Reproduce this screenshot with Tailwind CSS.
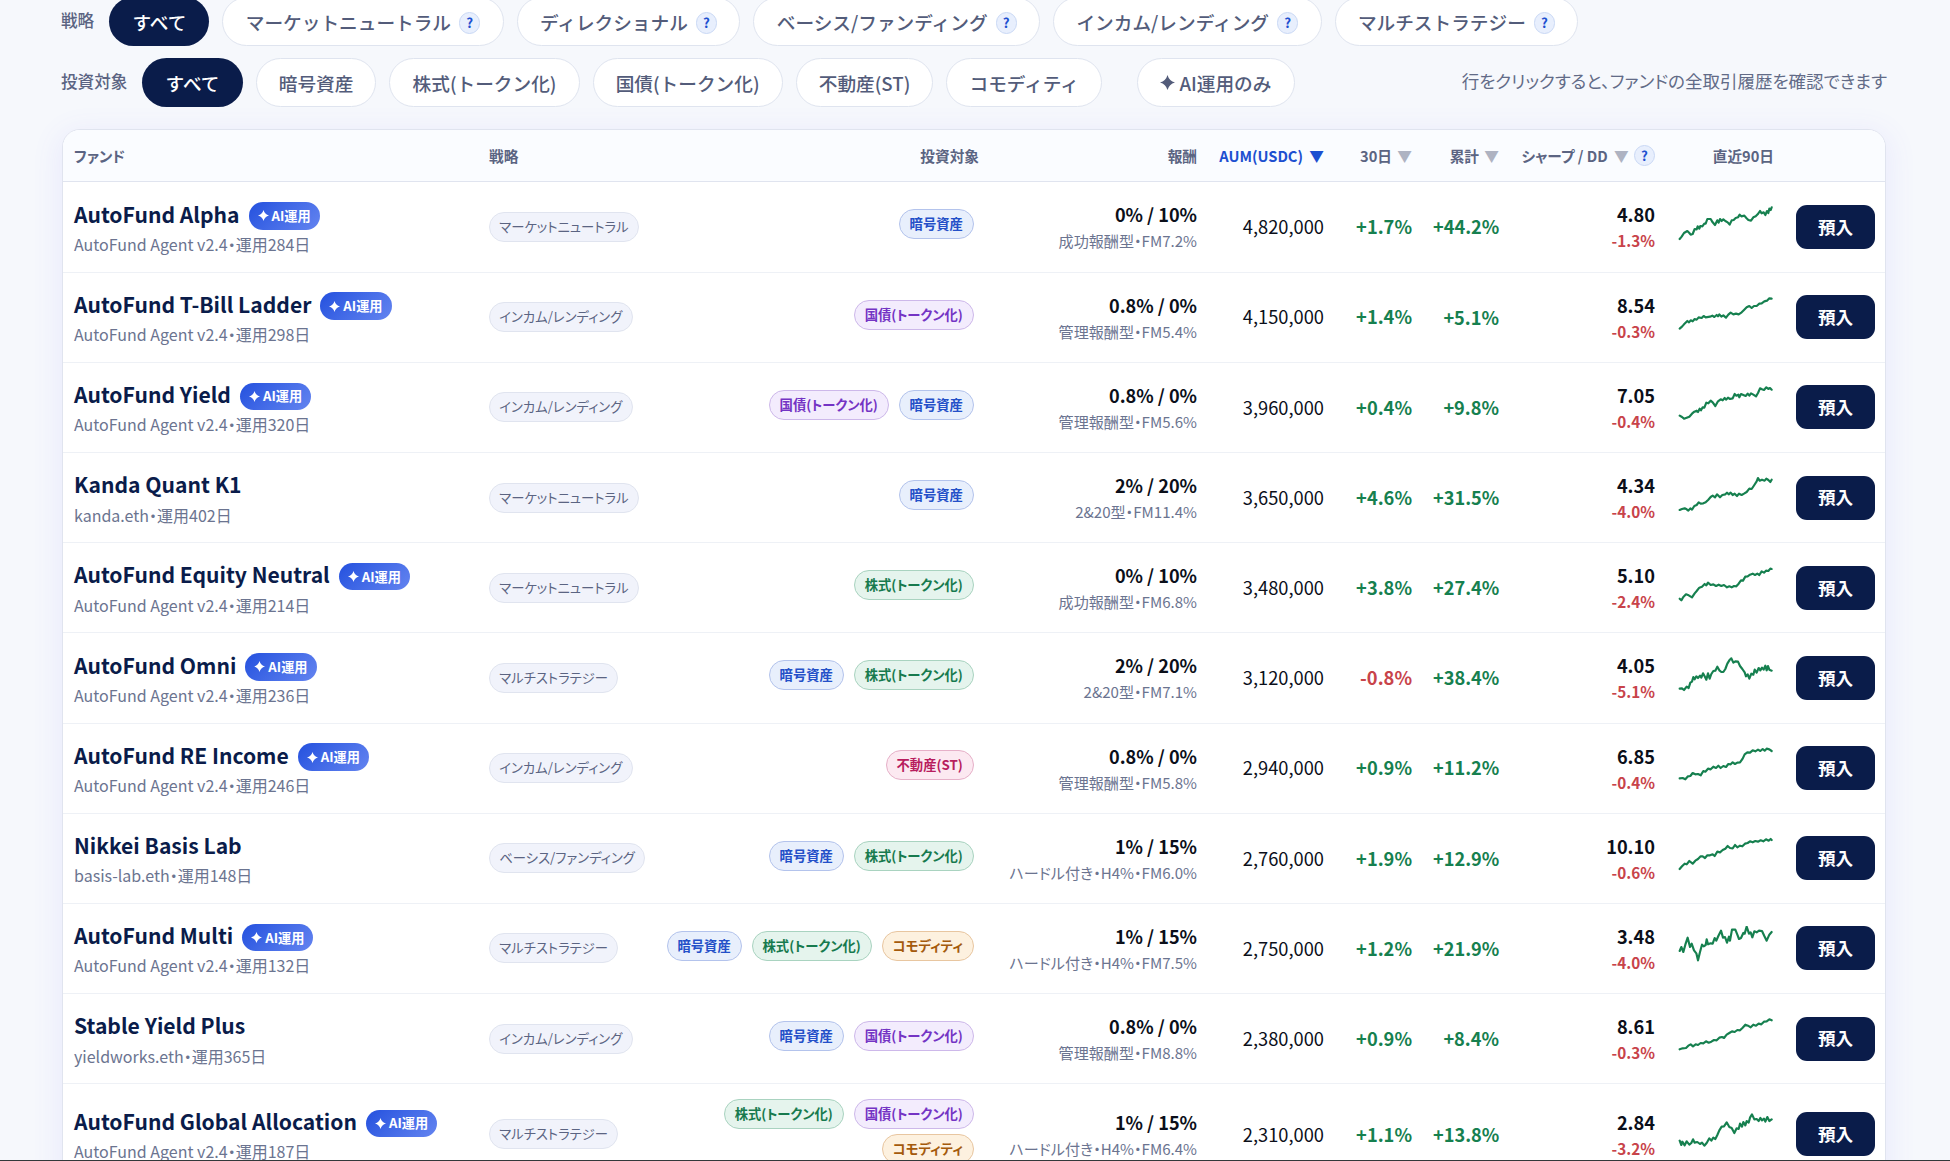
<!DOCTYPE html>
<html lang="ja">
<head>
    <meta charset="utf-8">
    <title>ファンド一覧</title>
    <script src="https://cdn.jsdelivr.net/npm/@tailwindcss/browser@4"></script>
</head>
<body class="h-screen overflow-hidden border-b border-[#33383a] bg-[#f6f8fc] font-['Noto_Sans_CJK_JP',sans-serif] text-[#0b0f1a]">
    <div class="pl-[61px] pr-[63px]">
        <div class="-mt-[3px] flex h-[49px] items-center text-[18.67px] text-[#535c7a]">
            <span class="mr-[15px] -mt-[2px] text-[16.6px] font-medium text-[#5b6482] [font-feature-settings:'palt']">戦略</span>
            <button class="mr-[13px] h-[49px] rounded-full bg-[#0a1c4a] px-[23.2px] font-medium text-white">すべて</button>
            <div id="strategies" class="flex gap-[13px]"></div>
        </div>
        <div class="mt-[12px] flex h-[49px] items-center text-[18.67px] text-[#535c7a]">
            <span class="mr-[15px] -mt-[2px] text-[16.6px] font-medium text-[#5b6482] [font-feature-settings:'palt']">投資対象</span>
            <button class="mr-[13px] h-[49px] rounded-full bg-[#0a1c4a] px-[23.2px] font-medium text-white">すべて</button>
            <div id="assets" class="flex gap-[13px]"></div>
            <button class="ml-[35px] flex h-[49px] items-center gap-[4px] rounded-full border border-[#dfe4ef] bg-white px-[22.3px] font-medium">
                <svg class="size-[15px]" viewBox="0 0 12 12" fill="currentColor"><path d="M6 0Q7.3 4.7 12 6 7.3 7.3 6 12 4.7 7.3 0 6 4.7 4.7 6 0Z"/></svg>
                AI運用のみ
            </button>
            <p class="-mt-[2px] ml-auto text-[17.5px] text-[#626b87] [font-feature-settings:'palt']">行をクリックすると、ファンドの全取引履歴を確認できます</p>
        </div>

        <div class="ml-px mt-[22px] w-[1824px] overflow-hidden rounded-t-[18px] border border-[#e0e4ef] bg-white shadow-[0_6px_28px_5px_rgba(99,91,255,0.08)] [font-feature-settings:'palt']">
            <div class="grid h-[52.4px] grid-cols-[415px_178px_334px_218px_127px_87px_88px_156px_119px_100px] items-center whitespace-nowrap border-b border-[#e0e4ef] bg-[#fafcff] text-right text-[14.67px] font-bold text-[#5b6482]">
                <div class="px-[11px] text-left">ファンド</div>
                <div class="px-[11px] text-left">戦略</div>
                <div class="px-[11px]">投資対象</div>
                <div class="px-[11px]">報酬</div>
                <div class="px-[11px] text-[#1d4fd0]">AUM(USDC) <span class="ml-[3px]">▼</span></div>
                <div class="pl-[11px] pr-[10px]">30日 <span class="ml-[2px] text-[#aeb3c2]">▼</span></div>
                <div class="px-[11px]">累計 <span class="ml-[2px] text-[#aeb3c2]">▼</span></div>
                <div class="flex items-center justify-end px-[11px]">シャープ / DD&nbsp;<span class="ml-[3px] text-[#aeb3c2]">▼</span><span class="ml-[5px] flex size-[21.3px] items-center justify-center rounded-full border border-[#c9d8f5] bg-[#e8effd] text-[13.33px] text-[#1d4fd0]">?</span></div>
                <div class="px-[11px]">直近90日</div>
                <div></div>
            </div>
            <div id="rows"></div>
        </div>
    </div>

    <script>
        const strategies = ['マーケットニュートラル', 'ディレクショナル', 'ベーシス/ファンディング', 'インカム/レンディング', 'マルチストラテジー'];
        const assets = ['暗号資産', '株式(トークン化)', '国債(トークン化)', '不動産(ST)', 'コモディティ'];

        const tagColors = {
            '暗号資産': 'border-[#b3c3ec] bg-[#e8effc] text-[#2450c8]',
            '株式(トークン化)': 'border-[#a9d3c0] bg-[#e5f4ed] text-[#177a4e]',
            '国債(トークン化)': 'border-[#cdb8ea] bg-[#f3ecfd] text-[#7434c4]',
            '不動産(ST)': 'border-[#e6b0c8] bg-[#fce9f1] text-[#b81d5e]',
            'コモディティ': 'border-[#e8c6a0] bg-[#fdf1df] text-[#a45a0c]'
        };

        // name, ai, sub, strategy, assets, fee, fee note, aum, 30d, total, sharpe, dd, sparkline
        const funds = [
            ['AutoFund Alpha', 1, 'AutoFund Agent v2.4・運用284日', 'マーケットニュートラル', ['暗号資産'], '0% / 10%', '成功報酬型・FM7.2%', '4,820,000', '+1.7%', '+44.2%', '4.80', '-1.3%', '8,102 14,95 21,84 31,78 37,84 41,89 47,87 53,72 59,73 62,64 67,71 70,63 76,64 82,56 86,56 91,42 101,42 107,52 114,60 121,46 125,53 129,42 134,48 139,43 145,48 152,52 158,59 164,46 170,45 176,39 183,37 188,29 193,34 202,32 208,39 214,45 222,47 229,37 236,34 242,28 249,18 254,25 260,22 265,30 270,18 274,24 277,11 281,15 284,7'],
            ['AutoFund T-Bill Ladder', 1, 'AutoFund Agent v2.4・運用298日', 'インカム/レンディング', ['国債(トークン化)'], '0.8% / 0%', '管理報酬型・FM5.4%', '4,150,000', '+1.4%', '+5.1%', '8.54', '-0.3%', '8,101 15,95 21,88 31,78 36,82 41,76 47,79 53,72 59,74 65,67 74,69 80,63 86,67 99,65 106,62 112,66 119,60 123,64 127,58 133,65 139,61 147,68 154,59 161,53 169,58 177,56 185,58 194,52 201,45 209,37 217,33 224,39 231,33 239,33 247,26 254,25 262,19 270,17 277,10 284,11'],
            ['AutoFund Yield', 1, 'AutoFund Agent v2.4・運用320日', 'インカム/レンディング', ['国債(トークン化)', '暗号資産'], '0.8% / 0%', '管理報酬型・FM5.6%', '3,960,000', '+0.4%', '+9.8%', '7.05', '-0.4%', '8,92 15,96 21,101 29,98 37,95 45,86 52,80 59,77 63,81 68,71 72,76 77,67 82,68 88,53 94,55 101,47 107,52 115,63 123,49 131,43 137,46 143,39 147,44 153,38 159,42 167,40 173,27 178,32 184,29 187,37 192,27 199,30 206,33 212,26 217,32 222,25 229,29 237,34 243,24 249,10 255,13 261,15 268,7 274,12 279,9 284,14'],
            ['Kanda Quant K1', 0, 'kanda.eth・運用402日', 'マーケットニュートラル', ['暗号資産'], '2% / 20%', '2&20型・FM11.4%', '3,650,000', '+4.6%', '+31.5%', '4.34', '-4.0%', '8,102 15,99 23,97 29,100 34,104 40,97 45,101 52,90 59,87 65,79 71,83 79,82 86,79 94,71 101,63 107,59 114,64 120,55 129,64 136,57 145,55 150,50 155,55 161,50 167,57 173,53 180,60 186,53 194,57 201,53 209,48 217,38 224,39 232,27 239,16 243,6 248,14 255,11 263,14 268,8 274,12 280,18 284,11'],
            ['AutoFund Equity Neutral', 1, 'AutoFund Agent v2.4・運用214日', 'マーケットニュートラル', ['株式(トークン化)'], '0% / 10%', '成功報酬型・FM6.8%', '3,480,000', '+3.8%', '+27.4%', '5.10', '-2.4%', '8,98 13,103 19,93 27,85 35,88 45,94 53,82 59,75 67,65 75,62 83,54 88,58 93,50 101,57 109,55 117,60 125,56 133,60 141,57 150,64 157,61 164,64 171,60 178,61 185,53 192,43 198,44 205,32 212,31 219,26 227,23 234,27 241,23 247,27 254,16 261,20 267,14 274,15 280,8 284,9'],
            ['AutoFund Omni', 1, 'AutoFund Agent v2.4・運用236日', 'マルチストラテジー', ['暗号資産', '株式(トークン化)'], '2% / 20%', '2&20型・FM7.1%', '3,120,000', '-0.8%', '+38.4%', '4.05', '-5.1%', '8,98 15,97 21,102 29,92 35,96 40,80 45,77 49,63 53,70 58,61 63,66 69,59 73,65 78,52 83,61 88,71 93,52 98,68 103,54 109,45 115,44 121,32 127,43 133,48 139,48 145,39 151,23 157,13 163,7 169,20 175,16 183,17 189,30 196,39 203,49 207,61 212,55 217,68 223,53 229,56 233,41 239,50 245,36 250,43 255,35 260,41 265,29 269,43 273,30 277,41 284,44'],
            ['AutoFund RE Income', 1, 'AutoFund Agent v2.4・運用246日', 'インカム/レンディング', ['不動産(ST)'], '0.8% / 0%', '管理報酬型・FM5.8%', '2,940,000', '+0.9%', '+11.2%', '6.85', '-0.4%', '8,97 17,96 25,100 33,91 40,90 47,81 55,85 63,84 71,88 79,75 85,77 93,68 101,70 109,62 117,66 124,59 131,66 139,60 147,63 154,54 161,55 167,49 174,54 181,50 189,49 197,38 203,25 211,19 219,20 227,13 235,16 243,11 250,15 257,9 263,14 269,8 277,10 284,15'],
            ['Nikkei Basis Lab', 0, 'basis-lab.eth・運用148日', 'ベーシス/ファンディング', ['暗号資産', '株式(トークン化)'], '1% / 15%', 'ハードル付き・H4%・FM6.0%', '2,760,000', '+1.9%', '+12.9%', '10.10', '-0.6%', '8,99 15,91 23,83 29,85 37,75 47,83 55,74 63,69 71,61 77,61 84,66 91,58 99,58 107,55 113,60 121,47 129,49 137,42 145,38 152,30 159,36 167,37 174,27 181,34 189,29 196,31 204,23 212,21 219,16 227,19 235,15 243,17 251,13 259,16 267,10 275,14 281,9 284,12'],
            ['AutoFund Multi', 1, 'AutoFund Agent v2.4・運用132日', 'マルチストラテジー', ['暗号資産', '株式(トークン化)', 'コモディティ'], '1% / 15%', 'ハードル付き・H4%・FM7.5%', '2,750,000', '+1.2%', '+21.9%', '3.48', '-4.0%', '8,75 13,63 19,78 25,56 32,35 39,63 44,53 51,73 58,82 63,103 69,78 75,56 80,61 86,57 89,40 93,55 101,52 107,53 113,36 118,44 124,30 132,14 138,35 144,33 150,50 156,32 159,44 165,11 175,11 181,26 186,39 192,36 199,21 203,23 209,2 216,23 221,19 226,34 232,16 239,19 246,14 255,15 262,30 269,44 277,26 284,18'],
            ['Stable Yield Plus', 0, 'yieldworks.eth・運用365日', 'インカム/レンディング', ['暗号資産', '国債(トークン化)'], '0.8% / 0%', '管理報酬型・FM8.8%', '2,380,000', '+0.9%', '+8.4%', '8.61', '-0.3%', '8,97 17,94 27,93 34,86 41,82 48,88 56,82 63,84 71,78 79,79 87,73 95,77 103,74 111,69 119,70 127,62 135,60 141,63 149,53 157,48 165,43 173,45 181,39 189,40 197,32 205,23 213,26 221,31 229,23 237,26 245,20 253,22 261,14 269,13 277,7 284,10'],
            ['AutoFund Global Allocation', 1, 'AutoFund Agent v2.4・運用187日', 'マルチストラテジー', ['株式(トークン化)', '国債(トークン化)', 'コモディティ'], '1% / 15%', 'ハードル付き・H4%・FM6.4%', '2,310,000', '+1.1%', '+13.8%', '2.84', '-3.2%', '8,86 13,99 16,89 23,100 29,88 37,98 43,93 48,82 53,92 61,90 69,96 75,92 82,101 89,93 97,79 103,86 109,77 115,81 121,69 127,55 134,44 141,43 149,31 157,45 164,48 172,63 179,49 185,51 189,35 195,44 199,30 205,40 209,27 215,32 219,17 225,7 232,22 239,21 245,27 250,18 255,25 261,20 265,29 271,15 277,27 284,22']
        ];

        const aiBadge = `<span class="mt-[3px] flex h-[27.5px] items-center gap-[3px] rounded-full bg-linear-135 from-[#2450de] to-[#6484f0] px-[9px] text-[13.2px] font-bold text-white"><svg class="size-[11px]" viewBox="0 0 12 12" fill="currentColor"><path d="M6 0Q7.3 4.7 12 6 7.3 7.3 6 12 4.7 7.3 0 6 4.7 4.7 6 0Z"/></svg>AI運用</span>`;

        document.querySelector('#strategies').innerHTML = strategies.map(s => `
            <button class="flex h-[49px] items-center whitespace-nowrap rounded-full border border-[#dfe4ef] bg-white px-[22.3px] font-medium">${s}<span class="ml-[8px] mt-[3px] flex size-[21.3px] items-center justify-center rounded-full border border-[#c9d8f5] bg-[#e8effd] text-[13.33px] font-bold text-[#1d4fd0]">?</span></button>`).join('');

        document.querySelector('#assets').innerHTML = assets.map(a => `
            <button class="h-[49px] whitespace-nowrap rounded-full border border-[#dfe4ef] bg-white px-[22.1px] font-medium">${a}</button>`).join('');

        document.querySelector('#rows').innerHTML = funds.map(([name, ai, sub, strategy, tags, fee, note, aum, month, total, sharpe, dd, line]) => `
            <div class="grid ${name === 'AutoFund Global Allocation' ? 'h-[101px]' : 'h-[90.2px]'} cursor-pointer grid-cols-[415px_178px_334px_218px_127px_87px_88px_156px_119px_100px] items-center whitespace-nowrap border-b border-[#eef1f6] text-right">
                <div class="px-[11px] pt-[2px] text-left">
                    <div class="flex h-[31px] items-center gap-[9px] text-[21.1px] font-bold text-[#0a1c4a]">${name}${ai ? aiBadge : ''}</div>
                    <div class="mt-px text-[16px] leading-[26px] text-[#6b7490]">${sub}</div>
                </div>
                <div class="flex px-[11px]"><span class="flex h-[30px] items-center rounded-full border border-[#e0e4ef] bg-[#f1f3fb] px-[9.3px] text-[13.33px] text-[#5b6482]">${strategy}</span></div>
                <div class="flex flex-wrap justify-end gap-x-[10.2px] pr-[16.3px]">${tags.map(t => `<span class="mb-[5.3px] flex h-[30px] items-center rounded-full border px-[9.8px] text-[13.33px] font-bold ${tagColors[t]}">${t}</span>`).join('')}</div>
                <div class="px-[11px]">
                    <div class="text-[18.1px] font-bold leading-[28px]">${fee}</div>
                    <div class="text-[15.1px] leading-[25px] text-[#6b7490]">${note}</div>
                </div>
                <div class="px-[11px] text-[18.3px]">${aum}</div>
                <div class="pl-[11px] pr-[10px] text-[18.3px] font-bold ${month[0] === '-' ? 'text-[#c8434a]' : 'text-[#16804f]'}">${month}</div>
                <div class="px-[11px] text-[18.2px] font-bold text-[#16804f]">${total}</div>
                <div class="px-[11px]">
                    <div class="text-[18.2px] font-bold leading-[28px]">${sharpe}</div>
                    <div class="text-[15.3px] font-bold leading-[25px] text-[#c8434a]">${dd}</div>
                </div>
                <div class="flex px-[11px] pb-[8px]"><svg class="h-[36px] w-[96px]" viewBox="0 0 288 108" fill="none" stroke="#16804f" stroke-width="6.5" stroke-linejoin="round" stroke-linecap="round"><polyline points="${line}"/></svg></div>
                <div class="px-[11px]"><button class="h-[44px] w-[79px] rounded-[11px] bg-[#0a1c4a] text-[17.6px] font-bold text-white">預入</button></div>
            </div>`).join('');
    </script>
</body>
</html>
